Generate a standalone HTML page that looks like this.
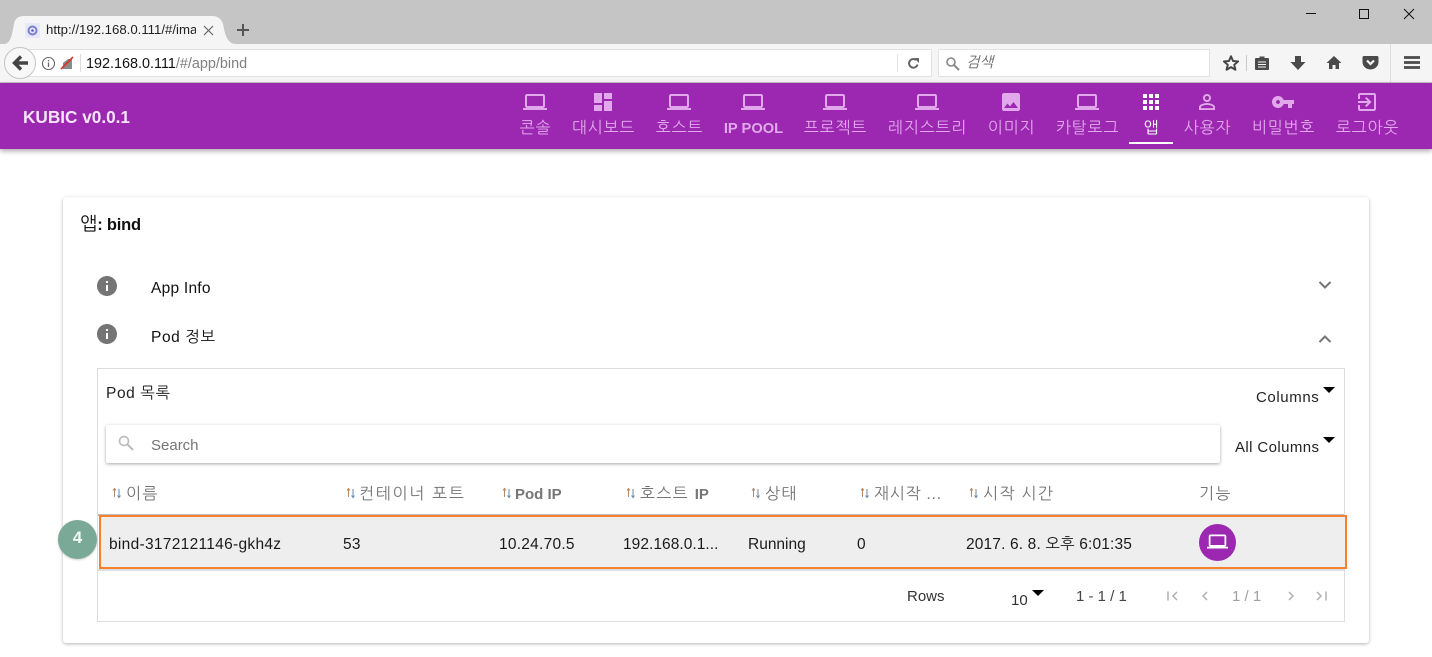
<!DOCTYPE html>
<html lang="ko"><head><meta charset="utf-8"><title>KUBIC</title>
<style>
*{box-sizing:border-box}
html,body{margin:0;padding:0;width:1432px;height:657px;overflow:hidden;background:#fff;font-family:"Liberation Sans","NanumGothic","Noto Sans CJK KR",sans-serif;color:#111}
.a{position:absolute}
.t{position:absolute;white-space:nowrap;line-height:20px;font-size:15px}
.n{position:absolute;top:119px;white-space:nowrap;line-height:20px;font-size:16px;color:#e1a9ec;transform:translateX(calc(-50% + .5px));letter-spacing:.8px}
.i{position:absolute;top:90px;width:24px;height:24px;fill:#e1a9ec}
.h{position:absolute;top:485px;white-space:nowrap;line-height:20px;font-size:16px;color:#757575;letter-spacing:1.3px}
.s{position:absolute;top:487px;width:10px;height:12px}
.c{position:absolute;top:535px;white-space:nowrap;line-height:20px;font-size:15.5px;letter-spacing:.25px;color:#1a1a1a}
</style></head><body>
<!-- browser chrome -->
<div class="a" style="left:0;top:0;width:1432px;height:44px;background:#c5c5c5"></div>
<div class="a" style="left:0;top:44px;width:1432px;height:39px;background:#f5f5f5;border-bottom:1px solid #c8c8c8"></div>
<svg class="a" style="left:0;top:14px" width="240" height="30"><path d="M4 30C11 30 12 20 14 10C15 4 19 2 24 2H212C217 2 221 4 223 10C225 20 227 30 236 30Z" fill="#f5f5f5"/></svg>
<div class="a" style="left:25px;top:23px;width:15px;height:15px;background:#e7e9fb"></div>
<svg class="a" style="left:25px;top:23px" width="15" height="15"><circle cx="7.5" cy="7.5" r="4" fill="none" stroke="#7a7fd0" stroke-width="2"/><circle cx="7.5" cy="7.5" r="1.3" fill="#5a60b0"/></svg>
<div class="t" style="left:46px;top:20px;font-size:13.2px;width:150px;overflow:hidden;color:#222;font-family:'Liberation Sans',sans-serif">http://192.168.0.111/#/imag</div>
<svg class="a" style="left:202px;top:24px" width="13" height="13"><path d="M2 2L11 11M11 2L2 11" stroke="#666" stroke-width="1.2"/></svg>
<svg class="a" style="left:236px;top:23px" width="14" height="14"><path d="M7 1V13M1 7H13" stroke="#555" stroke-width="2"/></svg>
<svg class="a" style="left:1300px;top:0" width="132" height="30"><path d="M6 13.5H16" stroke="#111" stroke-width="1"/><rect x="59.5" y="9.5" width="9" height="9" fill="none" stroke="#111" stroke-width="1"/><path d="M104 9L114 19M114 9L104 19" stroke="#111" stroke-width="1"/></svg>
<!-- url bar -->
<div class="a" style="left:20px;top:49px;width:912px;height:28px;background:#fff;border:1px solid #e2e2e2"></div>
<div class="a" style="left:4px;top:47px;width:32px;height:32px;border-radius:50%;background:#f8f8f8;border:1px solid #c4c4c4"></div>
<svg class="a" style="left:11px;top:54px" width="18" height="18"><path d="M10 2.5L3.5 9L10 15.5M4 9H17" fill="none" stroke="#444" stroke-width="3.4"/></svg>
<svg class="a" style="left:41px;top:56px" width="15" height="15"><circle cx="7.5" cy="7.5" r="6" fill="none" stroke="#666" stroke-width="1.1"/><path d="M7.5 6.5V11M7.5 4V5.4" stroke="#666" stroke-width="1.3"/></svg>
<svg class="a" style="left:60px;top:56px" width="14" height="14"><path d="M3 13V7L8 3H12V13Z" fill="#8a8a8a"/><path d="M1 13L13 1" stroke="#d9332a" stroke-width="1.6"/></svg>
<div class="a" style="left:80px;top:54px;width:1px;height:18px;background:#ddd"></div>
<div class="t" style="left:86px;top:54px;font-size:14.4px;color:#7f7f7f"><span style="color:#111">192.168.0.111</span>/#/app/bind</div>
<div class="a" style="left:897px;top:54px;width:1px;height:18px;background:#e4e4e4"></div>
<svg class="a" style="left:907px;top:57px" width="13" height="13"><path d="M10.5 7.5A4.3 4.3 0 1 1 9 3" fill="none" stroke="#666" stroke-width="2"/><path d="M7 1H12V6Z" fill="#666"/></svg>
<div class="a" style="left:938px;top:49px;width:272px;height:28px;background:#fff;border:1px solid #e2e2e2"></div>
<svg class="a" style="left:945px;top:56px" width="15" height="15"><circle cx="6" cy="6" r="4" fill="none" stroke="#888" stroke-width="1.6"/><path d="M9 9L14 14" stroke="#888" stroke-width="2"/></svg>
<div class="t" style="left:966px;top:53px;font-size:14.5px;color:#666;font-style:italic">검색</div>
<svg class="a" style="left:1222px;top:54px" width="18" height="18" viewBox="0 0 24 24"><path d="M12 3L14.7 9.3L21.5 9.9L16.3 14.4L17.9 21L12 17.5L6.1 21L7.7 14.4L2.5 9.9L9.3 9.3Z" fill="none" stroke="#444" stroke-width="2.6" stroke-linejoin="round"/></svg>
<div class="a" style="left:1246px;top:55px;width:1px;height:16px;background:#ccc"></div>
<svg class="a" style="left:1254px;top:54px" width="16" height="17"><path d="M2 4H5.5V2.5H10.5V4H14Q15 4 15 5V15Q15 16 14 16H2Q1 16 1 15V5Q1 4 2 4Z" fill="#4a4a4a"/><path d="M4 8H12M4 10.5H12M4 13H12" stroke="#f5f5f5" stroke-width="1"/></svg>
<svg class="a" style="left:1290px;top:55px" width="16" height="17"><path d="M5 1H11V7H15.5L8 15L0.5 7H5Z" fill="#4a4a4a"/></svg>
<svg class="a" style="left:1326px;top:55px" width="16" height="15"><path d="M8 1L15.5 8H13V14H9.5V10H6.5V14H3V8H0.5Z" fill="#4a4a4a"/></svg>
<svg class="a" style="left:1362px;top:55px" width="17" height="15"><path d="M2 1H15Q16.5 1 16.5 2.5V7A8 7.5 0 0 1 0.5 7V2.5Q.5 1 2 1Z" fill="#4a4a4a"/><path d="M5 5.5L8.5 9L12 5.5" fill="none" stroke="#f5f5f5" stroke-width="2.2"/></svg>
<div class="a" style="left:1390px;top:44px;width:1px;height:38px;background:#ddd"></div>
<svg class="a" style="left:1404px;top:55px" width="17" height="15"><path d="M0 2.5H16M0 7.5H16M0 12.5H16" stroke="#4a4a4a" stroke-width="2.8"/></svg>

<!-- app bar -->
<div class="a" style="left:0;top:83px;width:1432px;height:66px;background:#9c27b0;box-shadow:0 2px 5px rgba(0,0,0,.35)"></div>
<div class="t" style="left:23px;top:107px;font-size:17.2px;font-weight:bold;color:#f3e5f5">KUBIC v0.0.1</div>
<svg class="i" style="left:523px" viewBox="0 0 24 24"><path d="M20 18c1.1 0 1.99-.9 1.99-2L22 6c0-1.1-.9-2-2-2H4c-1.1 0-2 .9-2 2v10c0 1.1.9 2 2 2H0v2h24v-2h-4zM4 6h16v10H4V6z"/></svg>
<svg class="i" style="left:591px" viewBox="0 0 24 24"><path d="M3 13h8V3H3v10zm0 8h8v-6H3v6zm10 0h8V11h-8v10zm0-18v6h8V3h-8z"/></svg>
<svg class="i" style="left:667px" viewBox="0 0 24 24"><path d="M20 18c1.1 0 1.99-.9 1.99-2L22 6c0-1.1-.9-2-2-2H4c-1.1 0-2 .9-2 2v10c0 1.1.9 2 2 2H0v2h24v-2h-4zM4 6h16v10H4V6z"/></svg>
<svg class="i" style="left:741px" viewBox="0 0 24 24"><path d="M20 18c1.1 0 1.99-.9 1.99-2L22 6c0-1.1-.9-2-2-2H4c-1.1 0-2 .9-2 2v10c0 1.1.9 2 2 2H0v2h24v-2h-4zM4 6h16v10H4V6z"/></svg>
<svg class="i" style="left:823px" viewBox="0 0 24 24"><path d="M20 18c1.1 0 1.99-.9 1.99-2L22 6c0-1.1-.9-2-2-2H4c-1.1 0-2 .9-2 2v10c0 1.1.9 2 2 2H0v2h24v-2h-4zM4 6h16v10H4V6z"/></svg>
<svg class="i" style="left:915px" viewBox="0 0 24 24"><path d="M20 18c1.1 0 1.99-.9 1.99-2L22 6c0-1.1-.9-2-2-2H4c-1.1 0-2 .9-2 2v10c0 1.1.9 2 2 2H0v2h24v-2h-4zM4 6h16v10H4V6z"/></svg>
<svg class="i" style="left:999px" viewBox="0 0 24 24"><path d="M21 19V5c0-1.1-.9-2-2-2H5c-1.1 0-2 .9-2 2v14c0 1.1.9 2 2 2h14c1.1 0 2-.9 2-2zM8.5 13.5l2.5 3.01L14.5 12l4.5 6H5l3.5-4.5z"/></svg>
<svg class="i" style="left:1075px" viewBox="0 0 24 24"><path d="M20 18c1.1 0 1.99-.9 1.99-2L22 6c0-1.1-.9-2-2-2H4c-1.1 0-2 .9-2 2v10c0 1.1.9 2 2 2H0v2h24v-2h-4zM4 6h16v10H4V6z"/></svg>
<svg class="i" style="left:1139px;fill:#fff" viewBox="0 0 24 24"><path d="M4 8h4V4H4v4zm6 12h4v-4h-4v4zm-6 0h4v-4H4v4zm0-6h4v-4H4v4zm6 0h4v-4h-4v4zm6-10v4h4V4h-4zm-6 4h4V4h-4v4zm6 6h4v-4h-4v4zm0 6h4v-4h-4v4z"/></svg>
<svg class="i" style="left:1195px" viewBox="0 0 24 24"><path d="M12 5.9c1.16 0 2.1.94 2.1 2.1s-.94 2.1-2.1 2.1S9.9 9.16 9.9 8s.94-2.1 2.1-2.1m0 9c2.97 0 6.1 1.46 6.1 2.1v1.1H5.9V17c0-.64 3.13-2.1 6.1-2.1M12 4C9.79 4 8 5.79 8 8s1.79 4 4 4 4-1.79 4-4-1.79-4-4-4zm0 9c-2.67 0-8 1.34-8 4v3h16v-3c0-2.66-5.33-4-8-4z"/></svg>
<svg class="i" style="left:1271px" viewBox="0 0 24 24"><path d="M12.65 10C11.83 7.67 9.61 6 7 6c-3.31 0-6 2.69-6 6s2.69 6 6 6c2.61 0 4.83-1.67 5.65-4H17v4h4v-4h2v-4H12.65zM7 14c-1.1 0-2-.9-2-2s.9-2 2-2 2 .9 2 2-.9 2-2 2z"/></svg>
<svg class="i" style="left:1355px" viewBox="0 0 24 24"><path d="M10.09 15.59L11.5 17l5-5-5-5-1.41 1.41L12.67 11H3v2h9.67l-2.58 2.59zM19 3H5c-1.11 0-2 .9-2 2v4h2V5h14v14H5v-4H3v4c0 1.1.89 2 2 2h14c1.1 0 2-.9 2-2V5c0-1.1-.9-2-2-2z"/></svg>
<div class="n" style="left:535px">콘솔</div>
<div class="n" style="left:603px">대시보드</div>
<div class="n" style="left:679px">호스트</div>
<div class="n" style="left:753px;font-weight:bold;font-size:14.7px;letter-spacing:0">IP POOL</div>
<div class="n" style="left:835px">프로젝트</div>
<div class="n" style="left:927px">레지스트리</div>
<div class="n" style="left:1011px">이미지</div>
<div class="n" style="left:1087px">카탈로그</div>
<div class="n" style="left:1151px;color:#fff">앱</div>
<div class="n" style="left:1207px">사용자</div>
<div class="n" style="left:1283px">비밀번호</div>
<div class="n" style="left:1367px">로그아웃</div>
<div class="a" style="left:1129px;top:142px;width:44px;height:2px;background:#fff"></div>

<!-- card -->
<div class="a" style="left:63px;top:197px;width:1306px;height:446px;background:#fff;border-radius:3px;box-shadow:0 1px 3px rgba(0,0,0,.3)"></div>
<div class="t" style="left:80px;top:214px;font-size:16.5px;font-weight:bold;letter-spacing:-.2px;color:#111"><span style="font-weight:normal;font-size:18.5px">앱</span>: bind</div>
<svg class="a" style="left:95px;top:274px;fill:#757575" width="24" height="24" viewBox="0 0 24 24"><path d="M12 2C6.48 2 2 6.48 2 12s4.48 10 10 10 10-4.48 10-10S17.52 2 12 2zm1 15h-2v-6h2v6zm0-8h-2V7h2v2z"/></svg>
<svg class="a" style="left:95px;top:322px;fill:#757575" width="24" height="24" viewBox="0 0 24 24"><path d="M12 2C6.48 2 2 6.48 2 12s4.48 10 10 10 10-4.48 10-10S17.52 2 12 2zm1 15h-2v-6h2v6zm0-8h-2V7h2v2z"/></svg>
<div class="t" style="left:151px;top:279px;font-size:15.5px;letter-spacing:.25px">App Info</div>
<div class="t" style="left:151px;top:328px;font-size:15.5px;letter-spacing:.6px">Pod 정보</div>
<svg class="a" style="left:1318px;top:280px" width="14" height="11"><path d="M1.5 2L7 7.5L12.5 2" fill="none" stroke="#757575" stroke-width="2"/></svg>
<svg class="a" style="left:1318px;top:333px" width="14" height="11"><path d="M1.5 9L7 3.5L12.5 9" fill="none" stroke="#757575" stroke-width="2"/></svg>

<!-- table box -->
<div class="a" style="left:97px;top:368px;width:1248px;height:254px;border:1px solid #ddd"></div>
<div class="t" style="left:106px;top:384px;font-size:15.5px;letter-spacing:.6px;color:#222">Pod 목록</div>
<div class="t" style="left:1256px;top:388px;font-size:15px;letter-spacing:.6px;color:#222">Columns</div>
<svg class="a" style="left:1323px;top:387px" width="12" height="6"><path d="M0 0H12L6 6Z" fill="#000"/></svg>
<div class="a" style="left:106px;top:425px;width:1114px;height:38px;background:#fff;border-radius:2px;box-shadow:0 1px 3px rgba(0,0,0,.35)"></div>
<svg class="a" style="left:118px;top:435px" width="16" height="16"><circle cx="6" cy="6" r="4.5" fill="none" stroke="#bdbdbd" stroke-width="1.7"/><path d="M9.5 9.5L15 15" stroke="#bdbdbd" stroke-width="2"/></svg>
<div class="t" style="left:151px;top:436px;font-size:15px;color:#757575">Search</div>
<div class="t" style="left:1235px;top:438px;font-size:15px;letter-spacing:.4px;color:#222">All Columns</div>
<svg class="a" style="left:1323px;top:437px" width="12" height="6"><path d="M0 0H12L6 6Z" fill="#000"/></svg>

<!-- header row -->
<svg class="s" style="left:112px" viewBox="0 0 10 12"><path d="M2.5 10V2M1 3.5L2.5 1.5L4 3.5" fill="none" stroke="#b08a6a" stroke-width="1"/><path d="M7 2V10M5.5 8.5L7 10.5L8.5 8.5" fill="none" stroke="#6a8aa8" stroke-width="1"/></svg>
<div class="h" style="left:126px">이름</div>
<svg class="s" style="left:346px" viewBox="0 0 10 12"><path d="M2.5 10V2M1 3.5L2.5 1.5L4 3.5" fill="none" stroke="#b08a6a" stroke-width="1"/><path d="M7 2V10M5.5 8.5L7 10.5L8.5 8.5" fill="none" stroke="#6a8aa8" stroke-width="1"/></svg>
<div class="h" style="left:359px;letter-spacing:1.7px">컨테이너 포트</div>
<svg class="s" style="left:502px" viewBox="0 0 10 12"><path d="M2.5 10V2M1 3.5L2.5 1.5L4 3.5" fill="none" stroke="#b08a6a" stroke-width="1"/><path d="M7 2V10M5.5 8.5L7 10.5L8.5 8.5" fill="none" stroke="#6a8aa8" stroke-width="1"/></svg>
<div class="h" style="left:515px;font-weight:bold;font-size:15px;letter-spacing:0">Pod IP</div>
<svg class="s" style="left:626px" viewBox="0 0 10 12"><path d="M2.5 10V2M1 3.5L2.5 1.5L4 3.5" fill="none" stroke="#b08a6a" stroke-width="1"/><path d="M7 2V10M5.5 8.5L7 10.5L8.5 8.5" fill="none" stroke="#6a8aa8" stroke-width="1"/></svg>
<div class="h" style="left:640px;letter-spacing:1.3px">호스트 <b style="font-size:15px;letter-spacing:0">IP</b></div>
<svg class="s" style="left:751px" viewBox="0 0 10 12"><path d="M2.5 10V2M1 3.5L2.5 1.5L4 3.5" fill="none" stroke="#b08a6a" stroke-width="1"/><path d="M7 2V10M5.5 8.5L7 10.5L8.5 8.5" fill="none" stroke="#6a8aa8" stroke-width="1"/></svg>
<div class="h" style="left:765px">상태</div>
<svg class="s" style="left:860px" viewBox="0 0 10 12"><path d="M2.5 10V2M1 3.5L2.5 1.5L4 3.5" fill="none" stroke="#b08a6a" stroke-width="1"/><path d="M7 2V10M5.5 8.5L7 10.5L8.5 8.5" fill="none" stroke="#6a8aa8" stroke-width="1"/></svg>
<div class="h" style="left:874px;letter-spacing:.7px">재시작 ...</div>
<svg class="s" style="left:969px" viewBox="0 0 10 12"><path d="M2.5 10V2M1 3.5L2.5 1.5L4 3.5" fill="none" stroke="#b08a6a" stroke-width="1"/><path d="M7 2V10M5.5 8.5L7 10.5L8.5 8.5" fill="none" stroke="#6a8aa8" stroke-width="1"/></svg>
<div class="h" style="left:983px">시작 시간</div>
<div class="h" style="left:1199px">기능</div>

<!-- row -->
<div class="a" style="left:98px;top:514px;width:1246px;height:2px;background:#bdbdbd"></div>
<div class="a" style="left:98px;top:569px;width:1246px;height:2px;background:#e0e0e0"></div>
<div class="a" style="left:99px;top:515px;width:1248px;height:54px;background:#eee;border:2px solid #f5822a"></div>
<div class="c" style="left:109px;letter-spacing:.3px">bind-3172121146-gkh4z</div>
<div class="c" style="left:343px">53</div>
<div class="c" style="left:499px">10.24.70.5</div>
<div class="c" style="left:623px;letter-spacing:.05px">192.168.0.1...</div>
<div class="c" style="left:748px;letter-spacing:0">Running</div>
<div class="c" style="left:857px">0</div>
<div class="c" style="left:966px;letter-spacing:.15px">2017. 6. 8. 오후 6:01:35</div>
<div class="a" style="left:1199px;top:524px;width:37px;height:37px;border-radius:50%;background:#9c27b0"></div>
<svg class="a" style="left:1207px;top:531px;fill:#fff" width="21" height="21" viewBox="0 0 24 24"><path d="M20 18c1.1 0 1.99-.9 1.99-2L22 6c0-1.1-.9-2-2-2H4c-1.1 0-2 .9-2 2v10c0 1.1.9 2 2 2H0v2h24v-2h-4zM4 6h16v10H4V6z"/></svg>
<div class="a" style="left:58px;top:520px;width:39px;height:39px;border-radius:50%;background:#7aa998;box-shadow:0 1px 2px rgba(0,0,0,.2)"></div>
<div class="t" style="left:58px;top:528px;width:39px;text-align:center;font-size:17px;font-weight:bold;color:#f4f8f6">4</div>

<!-- footer -->
<div class="t" style="left:907px;top:587px;font-size:15px;color:#333">Rows</div>
<div class="t" style="left:1011px;top:591px;font-size:15px;color:#333">10</div>
<svg class="a" style="left:1032px;top:590px" width="12" height="6"><path d="M0 0H12L6 6Z" fill="#000"/></svg>
<div class="t" style="left:1076px;top:587px;font-size:15px;color:#444">1 - 1 / 1</div>
<svg class="a" style="left:1166px;top:589px" width="14" height="14"><path d="M2 2.5V11.5M11 3L7 7L11 11" fill="none" stroke="#b0b0b0" stroke-width="1.5"/></svg>
<svg class="a" style="left:1198px;top:589px" width="14" height="14"><path d="M9 3L5 7L9 11" fill="none" stroke="#b0b0b0" stroke-width="1.5"/></svg>
<div class="t" style="left:1232px;top:587px;font-size:15px;color:#a0a0a0">1 / 1</div>
<svg class="a" style="left:1284px;top:589px" width="14" height="14"><path d="M5 3L9 7L5 11" fill="none" stroke="#b0b0b0" stroke-width="1.5"/></svg>
<svg class="a" style="left:1314px;top:589px" width="14" height="14"><path d="M12 2.5V11.5M3 3L7 7L3 11" fill="none" stroke="#b0b0b0" stroke-width="1.5"/></svg>
</body></html>
